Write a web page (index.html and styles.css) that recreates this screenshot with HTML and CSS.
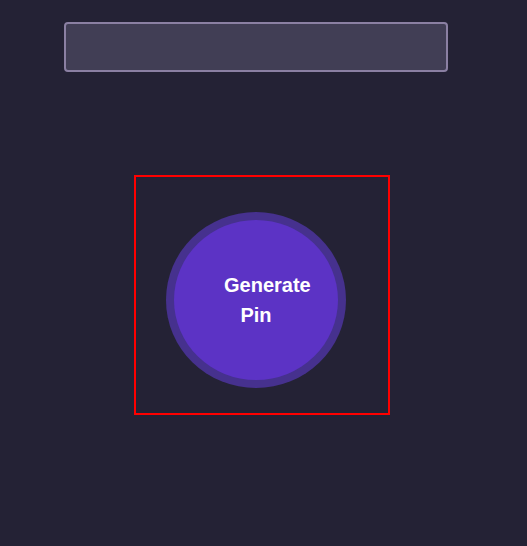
FILE: index.html
```html
<!DOCTYPE html>
<html>
<head>
<meta charset="utf-8">
<link rel="stylesheet" href="styles.css">
</head>
<body>
  <div class="field"></div>
  <div class="frame">
    <button class="btn"><span class="label">Generate Pin</span></button>
  </div>
</body>
</html>
```
FILE: styles.css
```css
html, body {
  margin: 0;
  padding: 0;
  background: #242235;
  height: 100%;
}
body {
  font-family: "Liberation Sans", Arial, sans-serif;
  padding-top: 22px;
  box-sizing: border-box;
}
.field {
  margin-left: 64px;
  width: 384px;
  height: 50px;
  box-sizing: border-box;
  border: 2px solid #8b80a3;
  border-radius: 4px;
  background: #413e55;
}
.frame {
  margin-top: 103px;
  margin-left: 134px;
  width: 256px;
  height: 240px;
  box-sizing: border-box;
  border: 2px solid #ff0000;
  padding: 43px 0 0 38px;
}
.btn {
  width: 164px;
  height: 160px;
  border: none;
  padding: 0;
  border-radius: 50%;
  background: #5c33c5;
  box-shadow: 0 0 0 8px #46318e;
  display: flex;
  align-items: center;
  justify-content: center;
  font-family: inherit;
}
.label {
  display: block;
  width: 64px;
  text-align: center;
  color: #ffffff;
  font-size: 20px;
  font-weight: bold;
  line-height: 30px;
}
```
